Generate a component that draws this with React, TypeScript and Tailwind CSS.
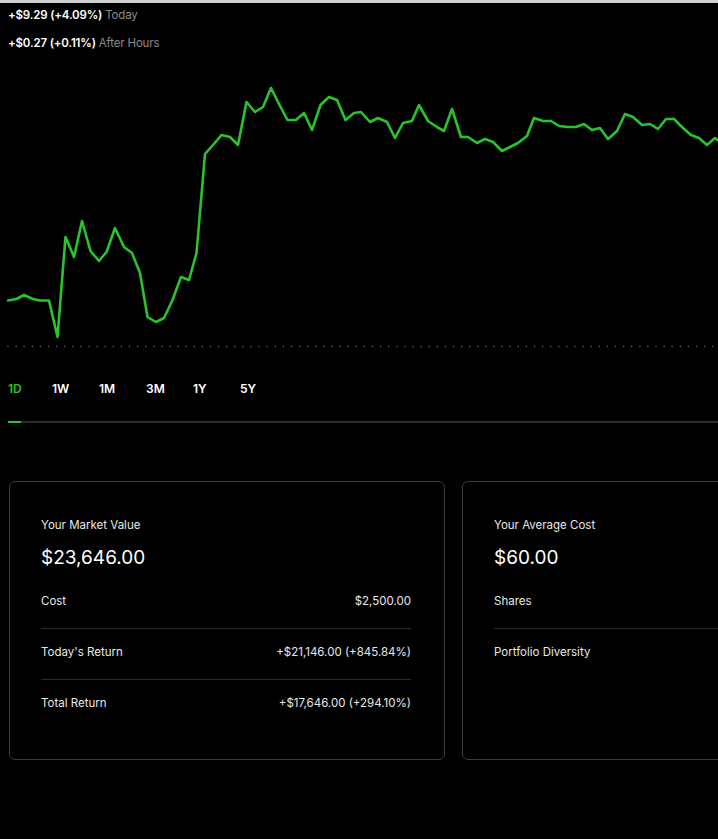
const points: [number, number][] = [
  [8, 300.5], [16.5, 299], [24, 295], [33, 299], [40, 300.5], [49, 300.5], [57.5, 337],
  [65.5, 237], [74, 257], [82, 221], [90.5, 251], [99, 261], [106.5, 252], [115, 228],
  [124, 247], [132, 253], [140, 273], [147.5, 317], [156, 322], [164, 318], [172.5, 300],
  [181, 277], [189, 280], [196.5, 253], [205, 154], [213, 145], [221.5, 135], [230, 137],
  [238, 145], [246.5, 102], [255, 112], [263, 107], [271, 88], [279, 104], [287.5, 120],
  [296, 120], [304, 113], [312, 130], [320.5, 105], [329, 97], [337, 100], [345.5, 120],
  [354, 113], [361, 112], [370, 122], [378, 118], [387, 122], [395, 138], [403, 123],
  [412, 121], [419, 105], [428, 121], [437, 127], [444, 131], [452, 109], [461, 137],
  [468, 137], [477, 143], [485, 139], [493, 142], [502, 151], [510, 147], [518, 143],
  [527, 136], [534, 118], [543, 121], [551, 121], [559, 126], [568, 127], [576, 127],
  [584, 124], [592, 130], [600, 128], [608, 139], [617, 131], [625, 114], [633, 117],
  [642, 125], [650, 124], [658, 129], [666, 119], [674, 119], [683, 128], [691, 135],
  [699, 138], [707, 145], [715, 138], [720, 142],
];

const ranges = ["1D", "1W", "1M", "3M", "1Y", "5Y"];

function Chart() {
  const dots = [];
  for (let x = 8; x < 718; x += 8.1) dots.push(x);
  return (
    <svg width="718" height="290" viewBox="0 60 718 290" className="block">
      <polyline
        points={points.map((p) => p.join(",")).join(" ")}
        fill="none"
        stroke="#27c42b"
        strokeWidth="2.6"
        strokeLinejoin="round"
        strokeLinecap="round"
      />
      {dots.map((x) => (
        <circle key={x} cx={x} cy={346.5} r="0.75" fill="#6a6a6a" />
      ))}
    </svg>
  );
}

function Row({ label, value, last }: { label: string; value?: string; last?: boolean }) {
  return (
    <div
      className={
        "flex justify-between pt-[15px] pb-[19px] text-[11.5px] leading-4 text-[#e8e8e8] " +
        (last ? "" : "border-b border-[#2a2a2c]")
      }
    >
      <span>{label}</span>
      {value && <span>{value}</span>}
    </div>
  );
}

export default function App() {
  return (
    <div
      className="min-h-screen w-[718px] overflow-hidden bg-black text-white"
      style={{ fontFamily: "Inter, 'Liberation Sans', sans-serif" }}
    >
      <div className="h-[3px] bg-[#cfcfcf]"></div>

      {/* header */}
      <div className="pl-2 pt-[4px] text-[11.5px] leading-4 tracking-[-0.015em]">
        <div>
          <span className="font-semibold">+$9.29 (+4.09%)</span>{" "}
          <span className="text-[#8c8c8c]">Today</span>
        </div>
        <div className="mt-3">
          <span className="font-semibold">+$0.27 (+0.11%)</span>{" "}
          <span className="text-[#8c8c8c]">After Hours</span>
        </div>
      </div>

      <div className="mt-[9px]">
        <Chart />
      </div>

      {/* range tabs */}
      <div className="mt-[31px] flex pl-2 text-[12px] font-semibold leading-4">
        {ranges.map((r, i) => (
          <span
            key={r}
            className={
              (i === 0 ? "text-[#27c42b] w-[44px]" : "text-white w-[47px]")
            }
          >
            {r}
          </span>
        ))}
      </div>
      <div className="mt-[24px] ml-2 flex h-[2px]">
        <div className="w-[13px] bg-[#27c42b]"></div>
        <div className="flex-1 bg-[#2b2b31]"></div>
      </div>

      {/* cards */}
      <div className="mt-[58px] flex gap-[17px] pl-[9px]">
        <div className="h-[279px] w-[436px] shrink-0 rounded-[6px] border-[1.5px] border-[#3b3b3d] pl-[31px] pr-[33px] pt-[35px]">
          <div className="text-[11.5px] leading-4 text-[#e8e8e8]">Your Market Value</div>
          <div className="mt-[11px] text-[19px] leading-7">$23,646.00</div>
          <div className="mt-[6px]">
            <Row label="Cost" value="$2,500.00" />
            <Row label="Today's Return" value="+$21,146.00 (+845.84%)" />
            <Row label="Total Return" value="+$17,646.00 (+294.10%)" last />
          </div>
        </div>
        <div className="h-[279px] w-[436px] shrink-0 rounded-[6px] border-[1.5px] border-[#3b3b3d] pl-[31px] pr-[33px] pt-[35px]">
          <div className="text-[11.5px] leading-4 text-[#e8e8e8]">Your Average Cost</div>
          <div className="mt-[11px] text-[19px] leading-7">$60.00</div>
          <div className="mt-[6px]">
            <Row label="Shares" />
            <Row label="Portfolio Diversity" last />
          </div>
        </div>
      </div>
    </div>
  );
}
